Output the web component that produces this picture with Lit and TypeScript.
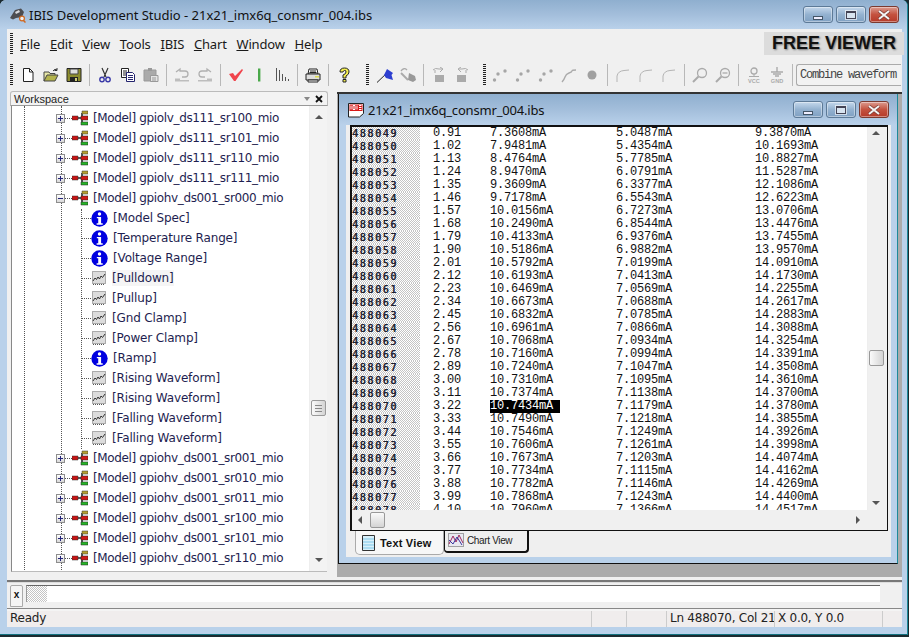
import { LitElement, html, css, svg } from "lit";
import { customElement } from "lit/decorators.js";

const rows = `488049 0.91 7.3608mA 5.0487mA 9.3870mA
488050 1.02 7.9481mA 5.4354mA 10.1693mA
488051 1.13 8.4764mA 5.7785mA 10.8827mA
488052 1.24 8.9470mA 6.0791mA 11.5287mA
488053 1.35 9.3609mA 6.3377mA 12.1086mA
488054 1.46 9.7178mA 6.5543mA 12.6223mA
488055 1.57 10.0156mA 6.7273mA 13.0706mA
488056 1.68 10.2490mA 6.8544mA 13.4476mA
488057 1.79 10.4133mA 6.9376mA 13.7455mA
488058 1.90 10.5186mA 6.9882mA 13.9570mA
488059 2.01 10.5792mA 7.0199mA 14.0910mA
488060 2.12 10.6193mA 7.0413mA 14.1730mA
488061 2.23 10.6469mA 7.0569mA 14.2255mA
488062 2.34 10.6673mA 7.0688mA 14.2617mA
488063 2.45 10.6832mA 7.0785mA 14.2883mA
488064 2.56 10.6961mA 7.0866mA 14.3088mA
488065 2.67 10.7068mA 7.0934mA 14.3254mA
488066 2.78 10.7160mA 7.0994mA 14.3391mA
488067 2.89 10.7240mA 7.1047mA 14.3508mA
488068 3.00 10.7310mA 7.1095mA 14.3610mA
488069 3.11 10.7374mA 7.1138mA 14.3700mA
488070 3.22 10.7434mA 7.1179mA 14.3780mA
488071 3.33 10.7490mA 7.1218mA 14.3855mA
488072 3.44 10.7546mA 7.1249mA 14.3926mA
488073 3.55 10.7606mA 7.1261mA 14.3998mA
488074 3.66 10.7673mA 7.1203mA 14.4074mA
488075 3.77 10.7734mA 7.1115mA 14.4162mA
488076 3.88 10.7782mA 7.1146mA 14.4269mA
488077 3.99 10.7868mA 7.1243mA 14.4400mA
488078 4.10 10.7960mA 7.1366mA 14.4517mA`.split("\n").map((l) => l.split(" "));

const i = (body: unknown) => html`<svg class="ic" viewBox="0 0 16 16" width="16" height="16">${body}</svg>`;

const dots = i(svg`<g fill="#a6a6a6"><circle cx="2.500" cy="13" r="1.700"/><circle cx="6" cy="7" r="1.700"/><circle cx="13" cy="4" r="1.700"/></g>`);
const arc = i(svg`<path d="M2 15 V9 Q3 4 9 3.500 L14 3" fill="none" stroke="#b4b4b4"/>`);

const tool: Record<string, unknown> = {
  newdoc: i(svg`<path d="M3.500 1.500h6l3.500 3.500v9.500h-9.500z" fill="#fff" stroke="#222"/><path d="M9.500 1.500v3.500h3.500" fill="none" stroke="#222"/>`),
  open: i(svg`<path d="M1 14V5h5l1 1.500h5V9" fill="#e8e8a8" stroke="#444"/><path d="M1 14l3-6h11l-3 6z" fill="#b3b34c" stroke="#444"/><path d="M10 4q2-3 4-1M14 1v2.500h-2.500" fill="none" stroke="#333"/>`),
  save: i(svg`<path d="M1 1.500h14v13H1z" fill="#8c8c2e" stroke="#222"/><path d="M4 2h8v5H4z" fill="#ddd" stroke="#444"/><path d="M4 10h8v4.500H4z" fill="#222"/><path d="M9 11h2v3H9z" fill="#cfcf7a"/>`),
  cut: i(svg`<path d="M5 1l4 9M11 1L7 10" stroke="#333" stroke-width="1.200" fill="none"/><circle cx="5" cy="12.500" r="2.200" fill="none" stroke="#3a3aa8" stroke-width="1.400"/><circle cx="11" cy="12.500" r="2.200" fill="none" stroke="#3a3aa8" stroke-width="1.400"/>`),
  copy: i(svg`<path d="M1.500 1.500h7v9h-7z" fill="#fff" stroke="#222"/><path d="M3 4h4M3 6h4M3 8h3" stroke="#222"/><path d="M6.500 5.500h6l2 2v7h-8z" fill="#fff" stroke="#24246e"/><path d="M8 8.500h5M8 10.500h5M8 12.500h5" stroke="#24246e"/>`),
  paste: i(svg`<path d="M1 3h12v11H1z" fill="#aaa" stroke="#999"/><path d="M5 1h4v3H5z" fill="#999"/><path d="M7.500 8.500h7.500v6H7.500z" fill="#e4e4e4" stroke="#999"/><path d="M9 11h4M9 13h4" stroke="#999"/>`),
  undo: i(svg`<path d="M2 5l4-3v2h5q3 0 3 3t-3 3H8" fill="none" stroke="#b0b0b0" stroke-width="1.300"/><path d="M1 11.500h5V13h9v1.500H1z" fill="#bdbdbd"/>`),
  redo: i(svg`<path d="M14 5l-4-3v2H5q-3 0-3 3t3 3h3" fill="none" stroke="#b0b0b0" stroke-width="1.300"/><path d="M15 11.500h-5V13H1v1.500h14z" fill="#bdbdbd"/>`),
  check: i(svg`<path d="M1 7l4-1 2 3 7-7 1 1-7.500 11H6z" fill="#f0444c"/>`),
  green: i(svg`<path d="M7 1.500h2.400v13H7z" fill="#4aa94a"/>`),
  bars: i(svg`<path d="M2.500 1v13M5.500 3v11M8.500 7v7M11.500 10v4M14.500 12v2" stroke="#555" fill="none"/>`),
  print: i(svg`<path d="M4 2h8l1 5H3z" fill="#fff" stroke="#222"/><path d="M1 7h14v6H1z" fill="#ddd" stroke="#222"/><path d="M3 13h10v2H3z" fill="#fff" stroke="#222"/><path d="M10 9h4v1.500h-4z" fill="#dcdc50"/><path d="M5 4h6M4.500 5.500h7" stroke="#222"/>`),
  help: i(svg`<path d="M4 5q0-4 4.500-4T13 5q0 2.500-3 4v2H7V8q3-1 3-3T8.500 3.500 7 5z" fill="#f5f050" stroke="#222"/><path d="M7 12.500h3V15H7z" fill="#f5f050" stroke="#222"/>`),
  flag: i(svg`<path d="M0 15.500L11 5" stroke="#222" fill="none"/><path d="M10 2l6 4-1.500 2 1.500 5-7-2 -2-3z" fill="#2d3fd0"/>`),
  flag2: i(svg`<path d="M1 6l7 7" stroke="#aaa" stroke-width="2" fill="none"/><path d="M1 4q3-4 6-1" stroke="#aaa" fill="none" stroke-width="1.300"/><path d="M9 6l6 3 1 4-3 2-5-2z" fill="#999"/>`),
  box1: i(svg`<path d="M4 8h9v7H4z" fill="#aaa"/><path d="M2 3q2-2.500 6-1h3M9 0l3 2-3 3M4 3v3" fill="none" stroke="#aaa"/>`),
  box2: i(svg`<path d="M3 8h9v7H3z" fill="#aaa"/><path d="M14 3q-2-2.500-6-1H5M7 0L4 2l3 3M12 3v3" fill="none" stroke="#aaa"/>`),
  dots,
  curve: i(svg`<path d="M1 15q2-2 3-5t4-4 3-2 4-1" fill="none" stroke="#aaa" stroke-width="1.400"/>`),
  dot: i(svg`<circle cx="8" cy="8" r="4.500" fill="#a0a0a0"/>`),
  arc,
  zoomIn: i(svg`<circle cx="10" cy="6" r="4.500" fill="none" stroke="#aaa" stroke-width="1.300"/><path d="M6.500 9.500L1 15" stroke="#aaa" stroke-width="2"/>`),
  zoomOut: i(svg`<circle cx="10" cy="6" r="4.500" fill="none" stroke="#aaa" stroke-width="1.300"/><path d="M6.500 9.500L1 15" stroke="#aaa" stroke-width="2"/><path d="M7.500 6h5" stroke="#aaa" stroke-width="1.300"/>`),
  vcc: i(svg`<circle cx="8" cy="4" r="3" fill="none" stroke="#aaa" stroke-width="1.300"/><path d="M8 7v2M3 9.500h10" stroke="#aaa"/><text x="8" y="16" text-anchor="middle" font-family="Liberation Sans" font-weight="700" font-size="5.600" fill="#aaa">VCC</text>`),
  gnd: i(svg`<path d="M8 0v5M2 5h12M4 7h8M6 9h4" stroke="#aaa" stroke-width="1.400" fill="none"/><text x="8" y="16" text-anchor="middle" font-family="Liberation Sans" font-weight="700" font-size="5.600" fill="#aaa">GND</text>`),
};

const toolbar: string[] = ["grip", "newdoc", "open", "save", "sep", "cut", "copy", "paste", "sep", "undo", "redo", "sep", "check", "green", "bars", "sep", "print", "sep", "help", "grip2", "flag", "flag2", "sep", "box1", "box2", "grip3", "dots", "dots", "dots", "curve", "dot", "sep", "arc", "arc", "arc", "sep", "zoomIn", "zoomOut", "sep", "vcc", "gnd", "sep"];

const modelIcon = html`<svg class="ic" viewBox="0 0 16 16" width="16" height="16"><path d="M5 8h5M10 3v11" stroke="#222" stroke-width="1.500"/><path d="M0 6h6v4H0z" fill="#c81414" stroke="#333" stroke-width=".5"/><path d="M10 1h6v3h-6z" fill="#b8a030" stroke="#333" stroke-width=".5"/><path d="M9 6h7v4H9z" fill="#d01818" stroke="#222" stroke-width=".5"/><path d="M9 12h7v3H9z" fill="#28b428" stroke="#222" stroke-width=".5"/></svg>`;
const infoIcon = html`<svg class="ic" viewBox="0 0 16 16" width="17" height="17"><circle cx="8" cy="8" r="7.700" fill="#0000e0"/><circle cx="8" cy="3.700" r="1.600" fill="#fff"/><path d="M5.500 6.500h4v6h1.500v1.300H5.300v-1.300h1.500V7.800H5.500z" fill="#fff"/></svg>`;
const waveIcon = html`<svg class="ic" viewBox="0 0 16 16" width="16" height="16"><path d="M1.500 1.500h13v12h-13z" fill="#dcdcdc" stroke="#666" stroke-dasharray="1 1"/><path d="M2 11l2-3 1.500 1.500L7 7l1.500 2L10 6l1.500 1.500L14 4" fill="none" stroke="#333"/><path d="M2 14.500h12" stroke="#555" stroke-dasharray="1 1"/></svg>`;

const model = (n: string, open = false) => ({ kind: "m", n: "[Model] " + n, open });
const leaf = (n: string, info = false) => ({ kind: "l", n, info });
const tree: any[] = [
  model("gpiolv_ds111_sr100_mio"), model("gpiolv_ds111_sr101_mio"), model("gpiolv_ds111_sr110_mio"), model("gpiolv_ds111_sr111_mio"),
  model("gpiohv_ds001_sr000_mio", true),
  leaf("[Model Spec]", true), leaf("[Temperature Range]", true), leaf("[Voltage Range]", true), leaf("[Pulldown]"), leaf("[Pullup]"), leaf("[Gnd Clamp]"), leaf("[Power Clamp]"), leaf("[Ramp]", true), leaf("[Rising Waveform]"), leaf("[Rising Waveform]"), leaf("[Falling Waveform]"), leaf("[Falling Waveform]"),
  model("gpiohv_ds001_sr001_mio"), model("gpiohv_ds001_sr010_mio"), model("gpiohv_ds001_sr011_mio"), model("gpiohv_ds001_sr100_mio"), model("gpiohv_ds001_sr101_mio"), model("gpiohv_ds001_sr110_mio"),
];

const menus = ["File", "Edit", "View", "Tools", "IBIS", "Chart", "Window", "Help"];

const winBtns = html`<div class="wbtns">
  <div class="wb"><span class="min"></span></div>
  <div class="wb"><span class="max"></span></div>
  <div class="wb close"><svg viewBox="0 0 14 10" width="14" height="10"><path d="M2 1l10 8M12 1L2 9" stroke="#7a3a34" stroke-width="3.400" fill="none"/><path d="M2 1l10 8M12 1L2 9" stroke="#f4f4f4" stroke-width="2" fill="none"/></svg></div>
</div>`;

@customElement("app-root")
export class AppRoot extends LitElement {
  static styles = css`
    :host { display: block; width: 909px; height: 637px; overflow: hidden; background: #1a2a30; font-family: "DejaVu Sans", sans-serif; color: #111; }
    * { box-sizing: border-box; }
    .ic { display: block; flex: none; }
    .win { width: 908px; height: 635px; background: #b9d1ea; border-right: 1px solid #1d8a9a; border-bottom: 1px solid #12707e; border-radius: 6px 6px 0 0; display: flex; flex-direction: column; overflow: hidden; }
    .title { height: 29px; flex: none; display: flex; align-items: center; padding: 0 8px 0 10px; background: linear-gradient(#8fafcf, #a3bedb 50%, #b9d1ea); }
    .title .t { font: 13px/16px "Noto Sans", sans-serif; margin-left: 3px; letter-spacing: -.02px; }
    .wbtns { display: flex; gap: 3px; margin-left: auto; }
    .wb { width: 30px; height: 17px; border: 1px solid #5d7a97; border-radius: 3px; background: linear-gradient(#c5d8ec, #94b2d0 50%, #7fa0c2); display: flex; align-items: center; justify-content: center; box-shadow: inset 0 0 0 1px rgba(255,255,255,.4); }
    .wb.close { background: linear-gradient(#dc9c90, #c4523f 50%, #b53a2a); border-color: #7b3a30; }
    .min { width: 10px; height: 4px; background: #eef; border: 1px solid #456; margin-top: 6px; }
    .max { width: 10px; height: 8px; border: 1px solid #445; border-top-width: 2px; background: #d8e4f0; box-shadow: 0 0 0 1px rgba(255,255,255,.6); }
    .inner { flex: 1; min-height: 0; margin: 0 5px 7px 7px; background: #f0f0f0; display: flex; flex-direction: column; }
    .menubar { height: 29px; flex: none; display: flex; align-items: center; padding-left: 3px; }
    .grip { width: 3px; flex: none; background: repeating-linear-gradient(#222 0 1px, transparent 1px 2px); }
    .menubar .grip { height: 22px; margin-right: 7px; }
    .menu { font: 13px/16px "Noto Sans", sans-serif; margin-right: 9.700px; letter-spacing: -.15px; color: #1a1a1a; }
    .menu u { text-underline-offset: 1px; }
    .free { margin-left: auto; width: 140px; height: 23px; background: #dcdcdc; display: flex; align-items: center; justify-content: center; font: 700 18px/23px "Liberation Sans", sans-serif; color: #111; text-shadow: 1px 1px 2px #777; margin-right: -2px; flex: none; }
    .toolbar { height: 33px; flex: none; display: flex; align-items: center; padding-left: 3px; }
    .toolbar .grip { height: 22px; }
    .g1 { margin-right: 3.500px; }
    .g2 { margin: 0 4.500px 0 10px; }
    .g3 { margin: 0 2px 0 10px; }
    .tb { width: 23px; height: 22px; display: flex; align-items: center; justify-content: center; flex: none; }
    .sep { width: 8px; height: 22px; flex: none; display: flex; justify-content: center; }
    .sep i { width: 1px; height: 22px; background: #b8b8b8; display: block; }
    .combo { width: 105px; height: 22px; flex: none; margin-left: 0; border: 1px solid #aaa; border-right: 0; border-radius: 3px 0 0 3px; background: #f2f2f2; font: 12px/20px "Liberation Mono", monospace; color: #444; padding-left: 3px; white-space: nowrap; overflow: hidden; letter-spacing: -1.200px; }
    .main { height: 489px; flex: none; display: flex; }
    .ws { width: 318px; margin-left: 3px; flex: none; display: flex; flex-direction: column; }
    .wshead { height: 15px; flex: none; border: 1px solid #bbb; border-bottom: 1px solid #999; border-radius: 3px 3px 0 0; display: flex; align-items: center; padding: 0 4px 0 3px; background: #f3f3f3; font: 11px/14px "Liberation Sans", sans-serif; color: #222; }
    .wshead .r { margin-left: auto; display: flex; gap: 4px; align-items: center; }
    .wsbody { height: 466px; flex: none; margin-left: 1px; width: 316px; display: flex; background: #fff; border-left: 1px solid #888; border-bottom: 1px solid #bbb; overflow: hidden; }
    .tree { flex: 1; position: relative; overflow: hidden; padding-top: 2px; }
    .vline { position: absolute; top: 0; width: 0; border-left: 1px dotted #555; }
    .row { height: 20px; display: flex; align-items: center; font: 12px/16px "DejaVu Sans", sans-serif; color: #1e1e50; white-space: nowrap; }
    .row.m { padding-left: 44px; letter-spacing: -.36px; }
    .row.l { padding-left: 69px; letter-spacing: -.15px; }
    .exp { width: 9px; height: 9px; border: 1px solid #8d8d8d; background: linear-gradient(#fff, #d8d8d8); flex: none; position: relative; }
    .exp::before { content: ""; position: absolute; left: 1px; right: 1px; top: 3px; height: 1px; background: #23237a; }
    .exp.plus::after { content: ""; position: absolute; top: 1px; bottom: 1px; left: 3px; width: 1px; background: #23237a; }
    .conn { border-top: 1px dotted #555; flex: none; }
    .m .conn { width: 7px; }
    .l .conn { width: 10px; }
    .lbl { margin-left: 5px; }
    .hl { background: #f5f5f5; }
    .vscroll { width: 18px; flex: none; background: #f3f3f3; display: flex; flex-direction: column; align-items: center; border-left: 1px solid #eee; }
    .vscroll.doc-v { width: 20px; padding-right: 3px; background: #f0f0f0; }
    .up { width: 0; height: 0; flex: none; border: 4px solid transparent; border-top: 0; border-bottom-color: #555; }
    .down { width: 0; height: 0; flex: none; border: 4px solid transparent; border-bottom: 0; border-top-color: #555; }
    .left { width: 0; height: 0; flex: none; border: 4px solid transparent; border-left: 0; border-right-color: #555; }
    .right { width: 0; height: 0; flex: none; border: 4px solid transparent; border-right: 0; border-left-color: #555; }
    .thumb { width: 15px; height: 16px; flex: none; border: 1px solid #999; border-radius: 2px; background: linear-gradient(90deg, #fafafa, #d4d4d4); }
    .thumb.lined { background: linear-gradient(transparent 4px, #888 4px 5px, transparent 5px 7px, #888 7px 8px, transparent 8px 10px, #888 10px 11px, transparent 11px) 3px 0 / 7px 100% no-repeat, linear-gradient(90deg, #fafafa, #d4d4d4); }
    .mdi { width: 565px; margin-left: 9px; margin-top: 1px; height: 485px; flex: none; background: #ababab; border-top: 2px solid #333; padding-left: 1px; }
    .child { width: 560px; height: 470px; border: 1px solid #111; border-top: 0; background: #b9d1ea; border-right-color: #1d8a9a; display: flex; flex-direction: column; }
    .ctitle { height: 31px; flex: none; display: flex; align-items: center; padding: 0 8px 0 9px; background: linear-gradient(#8fafcf, #a3bedb 50%, #b9d1ea); }
    .ctitle .t { font: 13px/16px "Noto Sans", sans-serif; margin-left: 4px; letter-spacing: -.18px; }
    .cbody { width: 545px; margin-left: 7px; background: #efefef; padding: 0 3px 0 4px; height: 432px; flex: none; display: flex; flex-direction: column; }
    .doc { height: 406px; flex: none; border: 2px solid #111; border-bottom-width: 1px; border-right-width: 1px; background: #fff; display: flex; flex-direction: column; }
    .docmain { height: 383px; flex: none; display: flex; overflow: hidden; }
    .table { flex: 1; overflow: hidden; background: #fff; }
    .trow { height: 13px; display: grid; grid-template-columns: 81px 57px 126px 139px 1fr; font: 12px/13px "Liberation Mono", monospace; letter-spacing: -.2px; color: #111; white-space: nowrap; background: linear-gradient(90deg, transparent 68px, #fff 68px), repeating-conic-gradient(#c4c4c4 0 25%, #fff 0 50%) 0 0 / 2px 2px; }
    .num { font: 10px/13px "DejaVu Sans Mono", monospace; letter-spacing: 1.650px; color: #1c2030; text-shadow: .4px 0 #1c2030; }
    .sel { background: #000; color: #fff; width: 70px; }
    .hscroll { height: 20px; flex: none; background: #f0f0f0; display: flex; align-items: center; padding-left: 6px; }
    .hscroll .thumb { margin-left: 8px; background: linear-gradient(#fafafa, #d4d4d4); }
    .hscroll .right { margin-left: auto; margin-right: 27px; }
    .tabs { height: 25px; flex: none; display: flex; align-items: flex-start; padding-left: 5px; }
    .tab { display: flex; align-items: center; flex: none; white-space: nowrap; }
    .tab.a { width: 89px; height: 24px; background: #f7f7f7; border: 1px solid #aaa; border-top: 0; border-radius: 0 0 5px 5px; padding-left: 5px; gap: 3px; font: 700 11px/14px "Liberation Sans", sans-serif; letter-spacing: .2px; color: #111; }
    .tab.b { width: 85px; height: 22px; background: #efefef; border: 1px solid #111; border-width: 0 2px 2px 1px; border-radius: 0 0 4px 4px; padding-left: 3px; gap: 3px; font: 10px/14px "Liberation Sans", sans-serif; letter-spacing: -.35px; color: #222; }
    .cmd { height: 28px; flex: none; border-top: 2px solid #777; padding: 3px 22px 0 3px; display: flex; gap: 3px; box-shadow: inset 0 1px 0 #ddd; }
    .xbtn { width: 13px; height: 22px; flex: none; border: 1px solid #aaa; border-radius: 2px 2px 0 0; font: 700 10px/18px "Liberation Sans", sans-serif; text-align: center; background: #f5f5f5; }
    .inp { flex: 1; height: 17px; background: #fff; border-top: 1px solid #666; border-left: 1px solid #999; display: flex; }
    .inp i { width: 20px; height: 100%; background: repeating-conic-gradient(#c4c4c4 0 25%, #fff 0 50%) 0 0 / 2px 2px; display: block; }
    .status { flex: 1; border-top: 1px solid #888; box-shadow: inset 0 2px 0 #f4f4f4; padding-top: 2px; background: #f0eded; display: grid; grid-template-columns: 585px 35px 40px 108px 108px 1fr; font: 12px/15px "DejaVu Sans", sans-serif; letter-spacing: -.25px; color: #222; }
    .status > div { height: 16px; border-right: 1px solid #ccc; padding-left: 3px; white-space: nowrap; overflow: hidden; }
    .status > div:last-child { border: 0; }
  `;

  private renderTool(k: string) {
    if (k === "grip") return html`<div class="grip g1"></div>`;
    if (k === "grip2") return html`<div class="grip g2"></div>`;
    if (k === "grip3") return html`<div class="grip g3"></div>`;
    if (k === "sep") return html`<div class="sep"><i></i></div>`;
    return html`<div class="tb">${tool[k]}</div>`;
  }

  private renderRow(r: any) {
    if (r.kind === "m")
      return html`<div class="row m"><div class="exp ${r.open ? "" : "plus"}"></div><div class="conn"></div>${modelIcon}<span class="lbl">${r.n}</span></div>`;
    return html`<div class="row l"><div class="conn"></div>${r.info ? infoIcon : waveIcon}<span class="lbl ${r.n === "[Pulldown]" ? "hl" : ""}">${r.n}</span></div>`;
  }

  render() {
    return html`<div class="win">
      <div class="title">
        <svg class="ic" viewBox="0 0 16 16" width="16" height="16"><path d="M0 11L5 3l6-1.500 3 3.500-2 5-6 1-3 1.500z" fill="#4c4c50"/><path d="M5 5l4-2 1 2-4 2z" fill="#d8d8dc"/><circle cx="12" cy="11.500" r="2.400" fill="#eee" stroke="#d06820" stroke-width="1.200"/><path d="M13.500 13.500l2 2" stroke="#d06820" stroke-width="1.500"/></svg>
        <span class="t">IBIS Development Studio - 21x21_imx6q_consmr_004.ibs</span>
        ${winBtns}
      </div>
      <div class="inner">
        <div class="menubar">
          <div class="grip"></div>
          ${menus.map((m) => html`<span class="menu"><u>${m[0]}</u>${m.slice(1)}</span>`)}
          <div class="free">FREE VIEWER</div>
        </div>
        <div class="toolbar">
          ${toolbar.map((k) => this.renderTool(k))}
          <div class="combo">Combine waveform</div>
        </div>
        <div class="main">
          <div class="ws">
            <div class="wshead">Workspace
              <div class="r">
                <svg viewBox="0 0 8 8" width="8" height="8"><path d="M1 2h6L4 6z" fill="#888"/></svg>
                <svg viewBox="0 0 8 8" width="8" height="8"><path d="M1 1l6 6M7 1L1 7" stroke="#111" stroke-width="1.800"/></svg>
              </div>
            </div>
            <div class="wsbody">
              <div class="tree">
                <div class="vline" style="left:12px;height:466px"></div>
                <div class="vline" style="left:49px;height:466px"></div>
                <div class="vline" style="left:69px;top:103px;height:240px"></div>
                ${tree.map((r) => this.renderRow(r))}
              </div>
              <div class="vscroll">
                <div class="up" style="margin-top:9px"></div>
                <div class="thumb lined" style="margin-top:281px"></div>
                <div class="down" style="margin-top:142px"></div>
              </div>
            </div>
          </div>
          <div class="mdi">
            <div class="child">
              <div class="ctitle">
                <svg class="ic" viewBox="0 0 16 16" width="16" height="16"><path d="M.5 1.500h15v10l-4 3.500H.5z" fill="#fff" stroke="#222"/><path d="M1.500 2.500h13V9h-13z" fill="#d81818"/><path d="M3 3.500v4M5 3.500v4h2v-4zM9 3.500v4M11 3.500h2.500M11 5.500h2.500M11 7.500h2.500" stroke="#fff" fill="none"/></svg>
                <span class="t">21x21_imx6q_consmr_004.ibs</span>
                ${winBtns}
              </div>
              <div class="cbody">
                <div class="doc">
                  <div class="docmain">
                    <div class="table">
                      ${rows.map((r) => html`<div class="trow"><span class="num">${r[0]}</span><span>${r[1]}</span><span class="${r[0] === "488070" ? "sel" : ""}">${r[2]}</span><span>${r[3]}</span><span>${r[4]}</span></div>`)}
                    </div>
                    <div class="vscroll doc-v">
                      <div class="up" style="margin-top:4px"></div>
                      <div class="thumb" style="margin-top:215px"></div>
                      <div class="down" style="margin-top:135px"></div>
                    </div>
                  </div>
                  <div class="hscroll"><div class="left"></div><div class="thumb"></div><div class="right"></div></div>
                </div>
                <div class="tabs">
                  <div class="tab a">
                    <svg class="ic" viewBox="0 0 16 16" width="16" height="16"><path d="M1.500 .5h12v15h-12z" fill="#d8f0fa" stroke="#333"/><path d="M2 4h11M2 7h11M2 10h11M2 13h11" stroke="#80c8e8"/></svg>
                    Text View
                  </div>
                  <div class="tab b">
                    <svg class="ic" viewBox="0 0 16 16" width="16" height="16"><path d="M.5 .5h15v13H.5z" fill="#e8e8f0" stroke="#555" stroke-dasharray="1 1"/><path d="M1 11l4-8 3 6 3-7 4 8" fill="none" stroke="#a02860"/><path d="M1 7l4 4 4-7 5 8" fill="none" stroke="#3838a0"/></svg>
                    Chart View
                  </div>
                </div>
              </div>
            </div>
          </div>
        </div>
        <div class="cmd">
          <div class="xbtn">x</div>
          <div class="inp"><i></i></div>
        </div>
        <div class="status">
          <div>Ready</div><div></div><div></div><div>Ln 488070, Col 21</div><div>X 0.0, Y 0.0</div><div></div>
        </div>
      </div>
    </div>`;
  }
}
